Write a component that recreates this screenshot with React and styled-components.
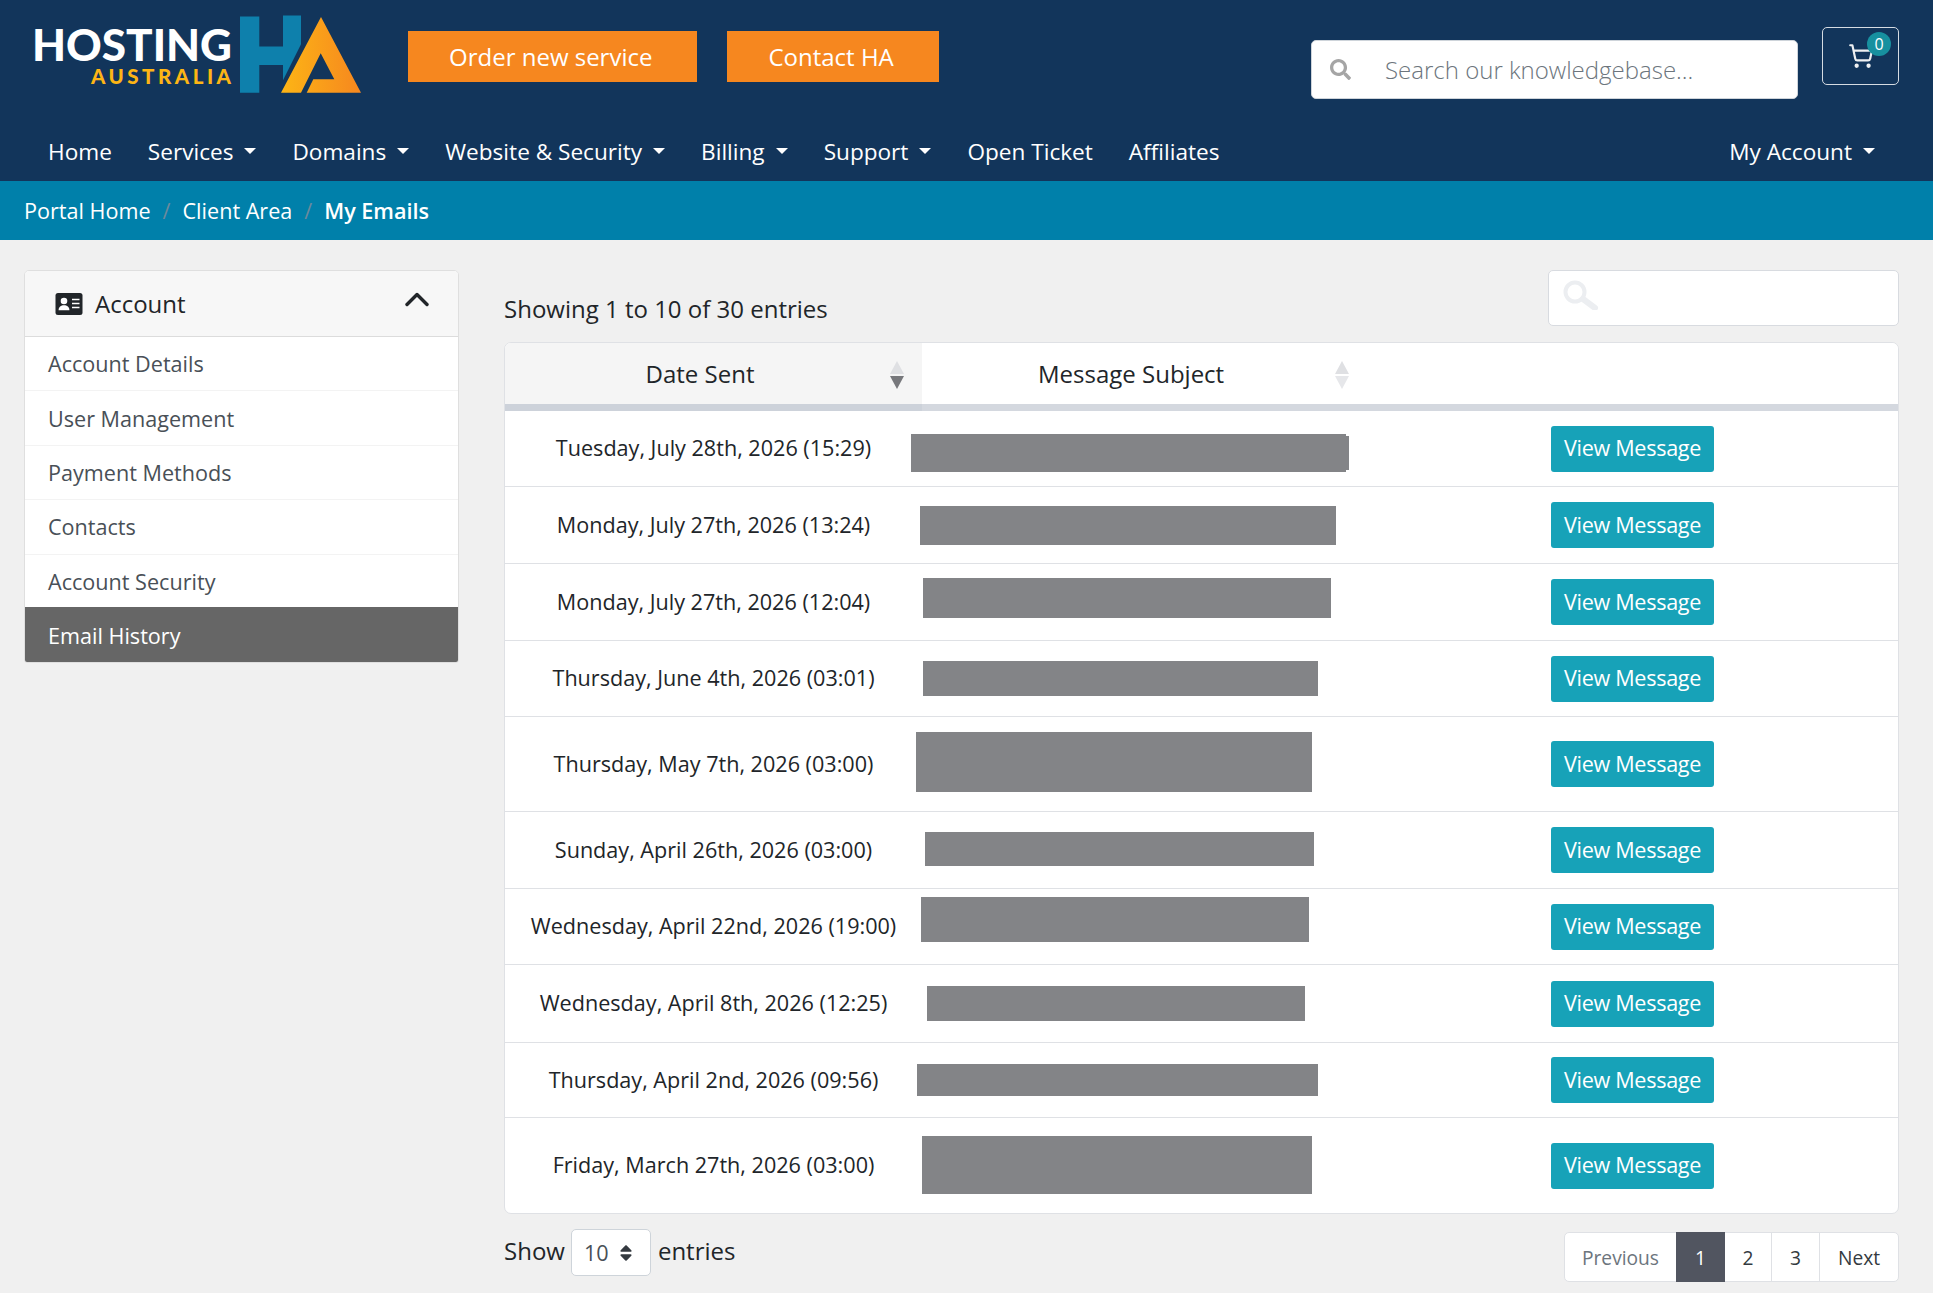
import React from 'react';
import styled, { createGlobalStyle } from 'styled-components';
import { FaSearch, FaSort } from 'react-icons/fa';
import { ShoppingCart } from 'lucide-react';

const Global = createGlobalStyle`
  html, body { margin: 0; padding: 0; background: #f0f0f0; }
  body { font-family: "Open Sans", "Liberation Sans", sans-serif; color: #212529; height: 1293px; overflow: hidden; }
  * { box-sizing: border-box; }
`;

const Header = styled.header`
  background: #12355b;
  height: 181px;
  display: flex;
  flex-direction: column;
`;
const TopBar = styled.div`
  height: 125px;
  display: flex;
  align-items: flex-start;
  padding: 0 34px 0 24px;
`;
const LogoBox = styled.svg`
  width: 350px;
  height: 100px;
  flex: none;
  margin: 10px 34px 0 0;
`;
const OrderButton = styled.a`
  height: 51px;
  margin-top: 31px;
  padding: 2px 45px 0 41px;
  margin-right: 30px;
  background: #f6871f;
  color: #fff;
  font-size: 24px;
  line-height: 47px;
  flex: none;
`;
const SearchBox = styled.div`
  width: 487px;
  height: 59px;
  margin: 40px 0 0 auto;
  background: #fff;
  border: 1px solid #ced4da;
  border-radius: 5px;
  display: flex;
  align-items: center;
  padding-left: 18px;
  color: #a5a5a5;
`;
const SearchHint = styled.span`
  margin-left: 34px;
  font-size: 24px;
  font-weight: 300;
  color: #6c757d;
`;
const CartButton = styled.a`
  position: relative;
  width: 77px;
  height: 58px;
  margin: 27px 0 0 24px;
  border: 1px solid #d5dbe2;
  border-radius: 5px;
  display: flex;
  align-items: center;
  justify-content: center;
  color: #eef0f2;
`;
const CartBadge = styled.span`
  position: absolute;
  top: 4px;
  right: 7px;
  width: 24px;
  height: 24px;
  border-radius: 50%;
  background: #17909f;
  color: #fff;
  font-size: 16px;
  line-height: 24px;
  text-align: center;
`;
const Nav = styled.nav`
  height: 56px;
  display: flex;
  align-items: center;
  padding: 0 40px 4px 30px;
`;
const NavItem = styled.a`
  padding: 0 18px;
  color: #fff;
  font-size: 22.6px;
  display: flex;
  align-items: center;
  white-space: nowrap;
  margin-left: ${p => (p.$right ? 'auto' : '0')};
`;
const Caret = styled.span`
  display: inline-block;
  margin-left: 11px;
  width: 0;
  height: 0;
  border-left: 6px solid transparent;
  border-right: 6px solid transparent;
  border-top: 6px solid #fff;
`;
const Crumbs = styled.div`
  height: 59px;
  background: #0080aa;
  display: flex;
  align-items: center;
  padding-left: 24px;
  font-size: 21.6px;
  color: #fff;
`;
const CrumbSep = styled.span`
  color: #6c8a9c;
  margin: 0 12px;
`;
const CrumbNow = styled.strong`
  font-weight: 600;
`;
const Body = styled.div`
  display: grid;
  grid-template-columns: 435px 1395px;
  column-gap: 45px;
  padding: 30px 34px 0 24px;
`;
const SideCard = styled.aside`
  height: 393px;
  border: 1px solid #dfdfdf;
  border-radius: 5px 5px 3px 3px;
  background: #fff;
  overflow: hidden;
  display: flex;
  flex-direction: column;
`;
const SideHead = styled.div`
  height: 66px;
  flex: none;
  background: #f7f7f7;
  border-bottom: 1px solid #dcdcdc;
  display: flex;
  align-items: center;
  padding: 0 29px 0 30px;
  font-size: 24px;
  color: #212529;
`;
const SideTitle = styled.span`
  margin-left: 12px;
  flex: 1;
`;
const Chevron = styled.svg`
  width: 24px;
  height: 16px;
  margin-bottom: 9px;
`;
const SideItem = styled.a`
  height: ${p => (p.$active ? '55px' : '54.4px')};
  flex: none;
  padding: ${p => (p.$active ? '2px' : '0')} 23px 0;
  margin-top: ${p => (p.$active ? '-2px' : '0')};
  display: flex;
  align-items: center;
  font-size: 21.6px;
  color: ${p => (p.$active ? '#fff' : '#495057')};
  background: ${p => (p.$active ? '#666666' : '#fff')};
  border-bottom: ${p => (p.$active ? '0' : '1px solid #f3f3f3')};
`;
const Main = styled.main`
  min-width: 0;
`;
const TopRow = styled.div`
  height: 72px;
  display: flex;
  align-items: flex-start;
  justify-content: space-between;
`;
const Showing = styled.div`
  font-size: 24px;
  margin-top: 22px;
  color: #212529;
`;
const FilterBox = styled.div`
  width: 351px;
  height: 56px;
  background: #fff;
  border: 1px solid #d8dbe0;
  border-radius: 5px;
  display: flex;
  align-items: center;
  padding: 0 0 6px 14px;
`;
const TableCard = styled.div`
  height: 872px;
  background: #fff;
  border: 1px solid #dfe1e5;
  border-radius: 7px;
  overflow: hidden;
`;
const Table = styled.table`
  width: 100%;
  border-collapse: separate;
  border-spacing: 0;
  table-layout: fixed;
`;
const HeadCell = styled.th`
  position: relative;
  height: 68px;
  font-size: 24px;
  font-weight: 400;
  color: #212529;
  text-align: ${p => (p.$left ? 'left' : 'center')};
  padding: 0 ${p => (p.$left ? '0' : '27px')} 0 ${p => (p.$left ? '116px' : '0')};
  background: ${p => (p.$sorted ? '#f5f5f5' : '#fff')};
  border-bottom: 7px solid ${p => (p.$sorted ? '#cdd2da' : '#d4d8df')};
`;
const SortIcon = styled.svg`
  position: absolute;
  right: ${p => p.$right}px;
  top: 18px;
  width: 14px;
  height: 28px;
`;
const Row = styled.tr`
  height: ${p => p.$h}px;
  & > td { border-bottom: 1px solid #dfe1e5; }
  &:last-child > td { border-bottom: 0; }
`;
const DateCell = styled.td`
  text-align: center;
  font-size: 21.6px;
  padding: 0 0 2px;
  white-space: nowrap;
`;
const SubjectCell = styled.td`
  padding: 0;
`;
const ActionCell = styled.td`
  padding: 0;
`;
const Redaction = styled.div`
  position: relative;
  width: ${p => p.$w}px;
  height: ${p => p.$h}px;
  margin-left: ${p => p.$x}px;
  margin-top: ${p => Math.max(p.$dy * 2, 0)}px;
  margin-bottom: ${p => Math.max(-p.$dy * 2, 0)}px;
  background: #838487;
  ${p => p.$ear && `
    &::after {
      content: '';
      position: absolute;
      top: 2px;
      bottom: 2px;
      right: -3px;
      width: 3px;
      background: #838487;
    }
  `}
`;
const ViewButton = styled.a`
  display: inline-flex;
  align-items: center;
  justify-content: center;
  width: 163px;
  height: 46px;
  padding-bottom: 2px;
  background: #17a2b8;
  border-radius: 3px;
  color: #fff;
  font-size: 21.6px;
  letter-spacing: -0.3px;
  vertical-align: middle;
`;
const Footer = styled.div`
  display: flex;
  justify-content: space-between;
  align-items: flex-start;
  margin-top: 15px;
`;
const Length = styled.div`
  display: flex;
  align-items: center;
  font-size: 24px;
  height: 47px;
  color: #212529;
`;
const LengthLabel = styled.span`
  padding-bottom: 5px;
`;
const LengthSelect = styled.div`
  width: 80px;
  height: 47px;
  margin: 0 7px 0 6px;
  background: #fff;
  border: 1px solid #ced4da;
  border-radius: 5px;
  display: flex;
  align-items: center;
  justify-content: space-between;
  padding: 0 14px 0 12px;
  font-size: 21.6px;
  color: #495057;
`;
const Pager = styled.div`
  display: flex;
  margin-top: 3px;
  height: 50px;
  background: #fff;
  border: 1px solid #dfe1e5;
  border-radius: 5px;
`;
const PageLink = styled.a`
  width: ${p => p.$w}px;
  display: flex;
  align-items: center;
  justify-content: center;
  font-size: 19.2px;
  margin-top: ${p => (p.$active ? '-1px' : '0')};
  margin-bottom: ${p => (p.$active ? '-1px' : '0')};
  color: ${p => (p.$active ? '#fff' : p.$muted ? '#6c757d' : '#343a40')};
  background: ${p => (p.$active ? '#515560' : 'transparent')};
  border-right: ${p => (p.$active || p.$muted ? '0' : '1px solid #dfe1e5')};
  &:last-child { border-right: 0; }
`;

const Logo = () => (
  <LogoBox viewBox="24 10 350 100">
    <defs>
      <linearGradient id="haGrad" x1="0" x2="1" y1="0" y2="0">
        <stop offset="0" stopColor="#fdb515" />
        <stop offset="1" stopColor="#f6871f" />
      </linearGradient>
    </defs>
    <text x="32" y="61" fill="#fff" fontFamily="Lato, sans-serif" fontWeight="900" fontSize="44" textLength="200" lengthAdjust="spacingAndGlyphs">HOSTING</text>
    <text x="91" y="84" fill="#fdb515" fontFamily="Lato, sans-serif" fontWeight="900" fontSize="20.5" textLength="140" lengthAdjust="spacing">AUSTRALIA</text>
    <path d="M240 16.5h19.3v30h23.7v-31h18v28.7l-18 36V65h-23.7v27.7H240z" fill="#0e80ac" />
    <path fillRule="evenodd" d="M321 17L361 92.7H306.7L313.3 79.3H334.3L320.7 53.3L301 92.7H281z" fill="url(#haGrad)" />
  </LogoBox>
);

const AccountIcon = () => (
  <svg width="28" height="22" viewBox="0 0 28 22">
    <rect x="0.5" y="0" width="27" height="22" rx="2.5" fill="#212529" />
    <circle cx="9" cy="8" r="3.3" fill="#fff" />
    <path d="M3.6 17.2c0-3.4 2.3-5 5.4-5s5.4 1.6 5.4 5z" fill="#fff" />
    <path d="M17 6.5h7.5M17 10.5h7.5M17 14.5h7.5" stroke="#fff" strokeWidth="1.6" />
  </svg>
);

const SortArrows = ({ right, active }) => (
  <SortIcon $right={right} viewBox="0 0 14 28">
    <path d="M7 0L14 13H0z" fill="#dfe0e3" />
    <path d="M0 15H14L7 28z" fill={active ? '#77787c' : '#e6e7ea'} />
  </SortIcon>
);

const FilterGlass = () => (
  <svg width="36" height="30" viewBox="0 0 36 30" fill="none" stroke="#eceef1">
    <circle cx="12" cy="12" r="9.5" strokeWidth="4" />
    <path d="M20 19L32 28" strokeWidth="6" strokeLinecap="round" />
  </svg>
);

const navItems = [
  ['Home', false], ['Services', true], ['Domains', true], ['Website & Security', true],
  ['Billing', true], ['Support', true], ['Open Ticket', false], ['Affiliates', false],
];
const sideItems = ['Account Details', 'User Management', 'Payment Methods', 'Contacts', 'Account Security'];
const rows = [
  ['Tuesday, July 28th, 2026 (15:29)', 76, -11, 435, 38, 4, true],
  ['Monday, July 27th, 2026 (13:24)', 77, -2, 416, 39, 0],
  ['Monday, July 27th, 2026 (12:04)', 77, 1, 408, 40, -4],
  ['Thursday, June 4th, 2026 (03:01)', 76, 1, 395, 35, 0],
  ['Thursday, May 7th, 2026 (03:00)', 95, -6, 396, 60, -2],
  ['Sunday, April 26th, 2026 (03:00)', 77, 3, 389, 34, -1],
  ['Wednesday, April 22nd, 2026 (19:00)', 76, -1, 388, 45, -7],
  ['Wednesday, April 8th, 2026 (12:25)', 78, 5, 378, 35, 0],
  ['Thursday, April 2nd, 2026 (09:56)', 75, -5, 401, 32, 0],
  ['Friday, March 27th, 2026 (03:00)', 95, 0, 390, 58, -1],
];

export default function App() {
  return (
    <>
      <Global />
      <Header>
        <TopBar>
          <Logo />
          <OrderButton>Order new service</OrderButton>
          <OrderButton>Contact HA</OrderButton>
          <SearchBox>
            <FaSearch size={21} />
            <SearchHint>Search our knowledgebase...</SearchHint>
          </SearchBox>
          <CartButton>
            <ShoppingCart size={26} strokeWidth={2} />
            <CartBadge>0</CartBadge>
          </CartButton>
        </TopBar>
        <Nav>
          {navItems.map(([label, caret]) => (
            <NavItem key={label}>{label}{caret && <Caret />}</NavItem>
          ))}
          <NavItem $right>My Account<Caret /></NavItem>
        </Nav>
      </Header>
      <Crumbs>
        Portal Home<CrumbSep>/</CrumbSep>Client Area<CrumbSep>/</CrumbSep><CrumbNow>My Emails</CrumbNow>
      </Crumbs>
      <Body>
        <SideCard>
          <SideHead>
            <AccountIcon />
            <SideTitle>Account</SideTitle>
            <Chevron viewBox="0 0 24 16">
              <path d="M2 13.5L12 3.5L22 13.5" fill="none" stroke="#212529" strokeWidth="3.4" strokeLinecap="round" strokeLinejoin="round" />
            </Chevron>
          </SideHead>
          {sideItems.map(s => <SideItem key={s}>{s}</SideItem>)}
          <SideItem $active>Email History</SideItem>
        </SideCard>
        <Main>
          <TopRow>
            <Showing>Showing 1 to 10 of 30 entries</Showing>
            <FilterBox><FilterGlass /></FilterBox>
          </TopRow>
          <TableCard>
            <Table>
              <colgroup>
                <col style={{ width: 417 }} />
                <col style={{ width: 629 }} />
                <col />
              </colgroup>
              <thead>
                <tr>
                  <HeadCell $sorted>Date Sent<SortArrows right={18} active /></HeadCell>
                  <HeadCell $left>Message Subject<SortArrows right={202} /></HeadCell>
                  <HeadCell />
                </tr>
              </thead>
              <tbody>
                {rows.map(([date, h, x, w, bh, dy, ear]) => (
                  <Row key={date} $h={h}>
                    <DateCell>{date}</DateCell>
                    <SubjectCell><Redaction $x={x} $w={w} $h={bh} $dy={dy} $ear={ear} /></SubjectCell>
                    <ActionCell><ViewButton>View Message</ViewButton></ActionCell>
                  </Row>
                ))}
              </tbody>
            </Table>
          </TableCard>
          <Footer>
            <Length>
              <LengthLabel>Show</LengthLabel>
              <LengthSelect>10<FaSort size={20} color="#343a40" /></LengthSelect>
              <LengthLabel>entries</LengthLabel>
            </Length>
            <Pager>
              <PageLink $w={111} $muted>Previous</PageLink>
              <PageLink $w={49} $active>1</PageLink>
              <PageLink $w={47}>2</PageLink>
              <PageLink $w={48}>3</PageLink>
              <PageLink $w={78}>Next</PageLink>
            </Pager>
          </Footer>
        </Main>
      </Body>
    </>
  );
}
